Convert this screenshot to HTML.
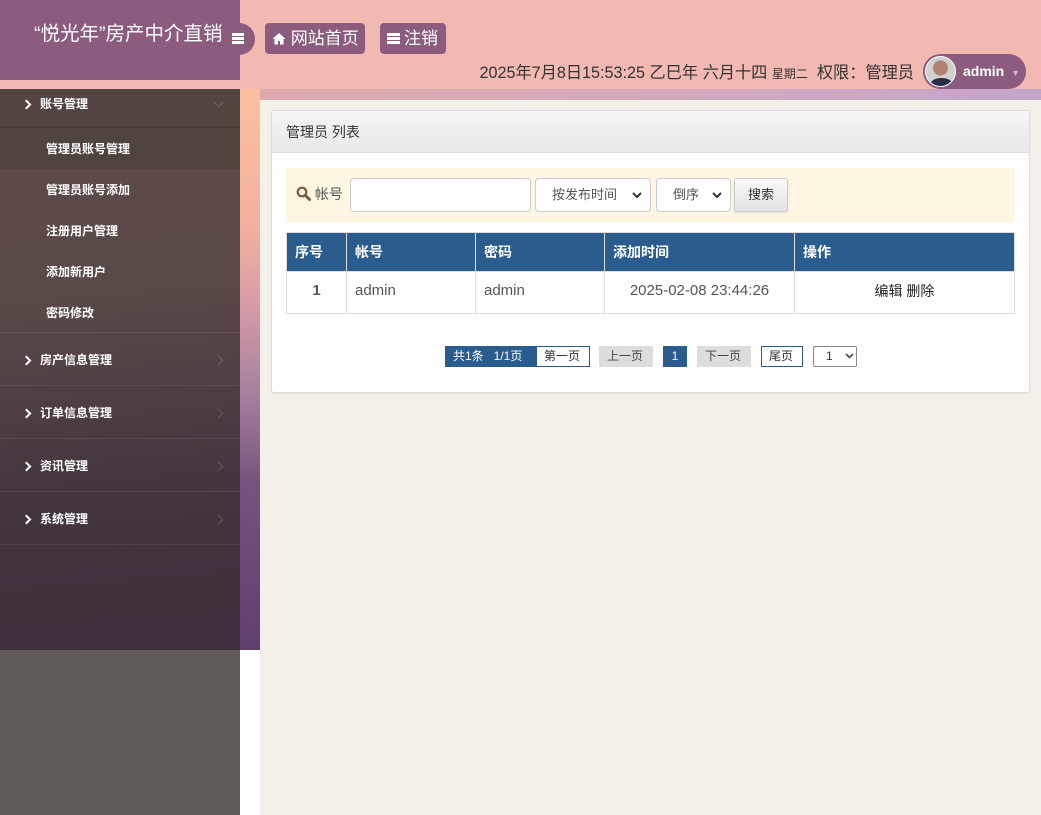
<!DOCTYPE html>
<html><head><meta charset="utf-8"><style>
*{margin:0;padding:0;box-sizing:border-box}
body{width:1041px;height:815px;overflow:hidden;position:relative;background:#fff;font-family:"Liberation Sans","Noto Sans CJK SC",sans-serif;}
.hdr{position:absolute;left:0;top:0;width:1041px;height:89px;background:#f1b9b1}
.logo{position:absolute;left:0;top:0;width:240px;height:80px;background:#8b5c7e;color:#fff;font-size:19.5px;line-height:68px;padding-left:34px;white-space:nowrap}
.tog{position:absolute;left:226px;top:23px;width:29px;height:32px;border-radius:0 16px 16px 0;background:#8b5c7e}
.btn{position:absolute;top:23px;height:31px;background:#8b5c7e;border-radius:4px;color:#fff;font-size:17px;line-height:31px;padding:0 7px;white-space:nowrap}
.bars{display:inline-block;width:13px;height:11px;border-top:3px solid #fff;border-bottom:3px solid #fff;position:relative;vertical-align:0px;margin-right:4px}
.bars:after{content:"";position:absolute;left:0;right:0;top:1px;border-top:3px solid #fff}
.info{position:absolute;right:127px;top:59px;font-size:16.2px;color:#333;white-space:nowrap}
.user{position:absolute;left:923px;top:54px;width:103px;height:35px;border-radius:18px;background:#8b5c7e;color:#fff;font-size:14px;font-weight:bold;line-height:35px;padding-left:40px}
.av{position:absolute;left:2px;top:2px;width:31px;height:31px;border-radius:50%;background:radial-gradient(circle at 50% 38%,#b08070 0 7px,#d0d0d0 8px);border:1px solid #fff;overflow:hidden}
.av:after{content:"";position:absolute;left:4px;top:21px;width:23px;height:14px;border-radius:50% 50% 0 0;background:#2a2e45}
.strip{position:absolute;left:0;top:89px;width:1041px;height:11px;background:linear-gradient(90deg,#e2a9a6,#d9a9b5 50%,#c6a6cd)}
.bg{position:absolute;left:240px;top:89px;width:20px;height:561px;background:linear-gradient(180deg,#fdbf9f 0%,#f3b09e 25%,#d89ca6 38%,#a47f9d 55%,#77537e 70%,#603e70 100%)}
.side{position:absolute;left:0;top:89px;width:240px;height:561px;background:linear-gradient(175deg,#5d4b47 0%,#5a4a47 35%,#443640 70%,#3d2f3b 100%);color:#fff;font-size:12px;font-weight:bold}
.side .g{height:53px;line-height:54px;border-bottom:1px solid rgba(255,255,255,.07);padding-left:40px;position:relative}
.side .g:before{content:"";position:absolute;left:23px;top:24px;width:5px;height:5px;border-top:2px solid #fff;border-right:2px solid #fff;transform:rotate(45deg)}
.side .g:after{content:"";position:absolute;left:215px;top:24px;width:6px;height:6px;border-top:1px solid rgba(255,255,255,.18);border-right:1px solid rgba(255,255,255,.18);transform:rotate(45deg)}
.side .g0{height:39px;line-height:30px;background:#514441;border-bottom:2px solid #473b39}
.side .g0:before{top:12px}
.side .g0:after{top:10px;transform:rotate(135deg)}
.side .it{height:41px;line-height:43px;padding-left:46px}
.side .act{background:#504440}
.side .sub{border-bottom:1px solid rgba(255,255,255,.07)}
.gray{position:absolute;left:0;top:650px;width:240px;height:165px;background:#615b59}
.main{position:absolute;left:260px;top:100px;width:781px;height:715px;background:#f2f0e9}
.panel{position:absolute;left:271px;top:110px;width:759px;height:283px;background:#fff;border:1px solid #ddd;border-radius:3px;box-shadow:0 1px 2px rgba(0,0,0,.06)}
.ph{height:42px;background:linear-gradient(#f5f5f5,#e8e8e8);border-bottom:1px solid #ddd;font-size:14px;line-height:42px;padding-left:14px;color:#333}
.search{position:absolute;left:14px;top:57px;width:729px;height:54px;background:#fcf6e3}
.search .lbl{position:absolute;left:10px;top:16px;font-size:14px;color:#555}
.in{position:absolute;top:10px;height:34px;border:1px solid #ccc;border-radius:4px;background:#fff;font-size:13px;color:#555;line-height:32px}
.in svg{position:absolute;right:8px;top:13px}
.sbtn{position:absolute;left:448px;top:10px;width:54px;height:34px;border:1px solid #ccc;border-radius:3px;background:linear-gradient(#fafafa,#e2e2e2);font-size:13px;line-height:32px;text-align:center;color:#333;box-shadow:0 1px 2px rgba(0,0,0,.1)}
table{position:absolute;left:14px;top:121px;width:729px;border-collapse:collapse;font-size:15px}
th{background:#2a5d8e;color:#fff;text-align:left;height:39px;padding-left:8px;border:1px solid #ddd;font-size:14px}
td{height:42px;border:1px solid #ddd;color:#555;padding-left:8px;padding-bottom:4px}
.pg{position:absolute;top:235px;font-size:12px;height:21px;line-height:21px;padding:0 8px;white-space:nowrap}
</style></head><body>
<div class="hdr"></div>
<div class="logo">“悦光年”房产中介直销</div>
<div class="tog"><span class="bars" style="position:absolute;left:6px;top:10px;width:12px;height:11px"></span></div>
<div class="btn" style="left:265px;width:100px"><svg width="14" height="13" viewBox="0 0 14 13" style="vertical-align:-1px"><path d="M7 1L0.5 7h2v5.5h3.5v-3.5h2v3.5h3.5V7h2z" fill="#fff"/></svg> 网站首页</div>
<div class="btn" style="left:380px;width:66px"><span class="bars"></span>注销</div>
<div class="info">2025年7月8日15:53:25 乙巳年 六月十四 <span style="font-size:12px">星期二</span>&nbsp; 权限：管理员</div>
<div class="user"><div class="av"></div>admin <span style="font-size:9px;color:#cbb;margin-left:3px">▼</span></div>
<div class="strip"></div>
<div class="bg"></div>
<div class="side">
<div class="g g0">账号管理</div>
<div class="it act">管理员账号管理</div>
<div class="it">管理员账号添加</div>
<div class="it">注册用户管理</div>
<div class="it">添加新用户</div>
<div class="it sub">密码修改</div>
<div class="g">房产信息管理</div>
<div class="g">订单信息管理</div>
<div class="g">资讯管理</div>
<div class="g">系统管理</div>
</div>
<div class="gray"></div>
<div class="main"></div>
<div class="panel">
<div class="ph">管理员 列表</div>
<div class="search">
<div class="lbl"><svg width="15" height="15" viewBox="0 0 15 15" style="vertical-align:-2px"><circle cx="6" cy="6" r="4.3" fill="none" stroke="#7a5a40" stroke-width="2.2"/><path d="M9.2 9.2L13.5 13.5" stroke="#7a5a40" stroke-width="3" stroke-linecap="round"/></svg> 帐号</div>
<div class="in" style="left:64px;width:181px"></div>
<div class="in" style="left:249px;width:116px;padding-left:16px">按发布时间<svg width="10" height="7" viewBox="0 0 10 7"><path d="M1 1l4 4 4-4" fill="none" stroke="#333" stroke-width="2"/></svg></div>
<div class="in" style="left:370px;width:75px;padding-left:16px">倒序<svg width="10" height="7" viewBox="0 0 10 7"><path d="M1 1l4 4 4-4" fill="none" stroke="#333" stroke-width="2"/></svg></div>
<div class="sbtn">搜索</div>
</div>
<table>
<tr><th style="width:60px">序号</th><th style="width:129px">帐号</th><th style="width:129px">密码</th><th style="width:190px">添加时间</th><th>操作</th></tr>
<tr><td style="text-align:center;padding-left:0;font-weight:bold">1</td><td>admin</td><td>admin</td><td style="text-align:center;padding-left:0">2025-02-08 23:44:26</td><td style="text-align:center;padding-left:0;color:#222;font-size:14px">编辑 删除</td></tr>
</table>
<div class="pg" style="left:173px;background:#2a5d8e;color:#fff;width:92px">共1条&nbsp;&nbsp; 1/1页</div>
<div class="pg" style="left:264px;border:1px solid #2a5d8e;color:#333;padding:0 7px;line-height:19px;width:54px">第一页</div>
<div class="pg" style="left:327px;background:#ddd;color:#444;width:54px">上一页</div>
<div class="pg" style="left:391px;background:#2a5d8e;color:#fff;width:24px;text-align:center;padding:0">1</div>
<div class="pg" style="left:425px;background:#ddd;color:#444;width:54px">下一页</div>
<div class="pg" style="left:489px;border:1px solid #2a5d8e;color:#333;padding:0 7px;line-height:19px;width:42px">尾页</div>
<div class="pg" style="left:541px;border:1px solid #888;border-radius:2px;width:44px;color:#333;line-height:19px;padding-left:12px">1 <svg width="9" height="6" viewBox="0 0 9 6" style="margin-left:9px;vertical-align:1px"><path d="M1 1l3.5 3.5L8 1" fill="none" stroke="#555" stroke-width="1.8"/></svg></div>
</div>
</body></html>
